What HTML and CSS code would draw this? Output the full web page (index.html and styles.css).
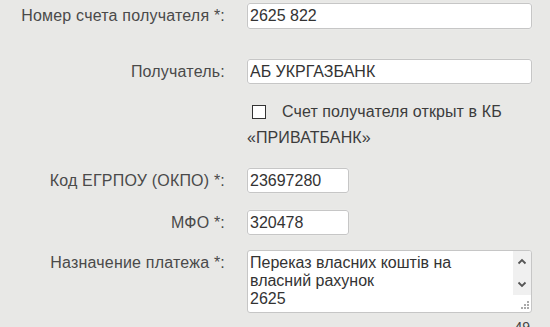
FILE: index.html
```html
<!DOCTYPE html>
<html lang="ru">
<head>
<meta charset="utf-8">
<link rel="stylesheet" href="styles.css">
</head>
<body>
<form class="form">
  <div class="row r1">
    <label class="lbl">Номер счета получателя *:</label>
    <input class="inp wide" type="text" value="2625 822">
  </div>
  <div class="row r2">
    <label class="lbl">Получатель:</label>
    <input class="inp wide" type="text" value="АБ УКРГАЗБАНК">
  </div>
  <div class="row r3">
    <span class="lbl"></span>
    <div class="check">
      <span class="box"></span><span class="check-text">Счет получателя открыт в КБ «ПРИВАТБАНК»</span>
    </div>
  </div>
  <div class="row r4">
    <label class="lbl">Код ЕГРПОУ (ОКПО) *:</label>
    <input class="inp short" type="text" value="23697280">
  </div>
  <div class="row r5">
    <label class="lbl">МФО *:</label>
    <input class="inp short" type="text" value="320478">
  </div>
  <div class="row r6">
    <label class="lbl lbl-top">Назначение платежа *:</label>
    <div class="ta">
      <div class="ta-text">Переказ власних коштів на<br>власний рахунок<br>2625</div>
      <div class="ta-side">
        <div class="ta-bar">
          <svg class="chev" width="10" height="7" viewBox="0 0 10 7"><path d="M1.5 5.5 L5 2 L8.5 5.5" fill="none" stroke="#555" stroke-width="1.8"/></svg>
          <svg class="chev" width="10" height="7" viewBox="0 0 10 7"><path d="M1.5 1.5 L5 5 L8.5 1.5" fill="none" stroke="#555" stroke-width="1.8"/></svg>
        </div>
        <svg class="grip" width="10" height="10" viewBox="0 0 10 10">
          <rect x="7" y="1" width="2" height="2" fill="#aaa"/>
          <rect x="4" y="4" width="2" height="2" fill="#aaa"/>
          <rect x="7" y="4" width="2" height="2" fill="#aaa"/>
          <rect x="1" y="7" width="2" height="2" fill="#aaa"/>
          <rect x="4" y="7" width="2" height="2" fill="#aaa"/>
          <rect x="7" y="7" width="2" height="2" fill="#aaa"/>
        </svg>
      </div>
    </div>
  </div>
  <div class="row r7">
    <span class="lbl"></span>
    <div class="counter">49</div>
  </div>
</form>
</body>
</html>
```
FILE: styles.css
```css
html, body {
  margin: 0;
  padding: 0;
  background: #e8e8e6;
  font-family: "Liberation Sans", Arial, sans-serif;
  font-size: 16px;
  color: #444;
  overflow: hidden;
}
.form {
  padding-top: 3px;
  display: flex;
  flex-direction: column;
}
.row {
  display: flex;
  align-items: center;
}
.lbl {
  width: 225px;
  margin-right: 22px;
  text-align: right;
  color: #4a4a4a;
  flex: none;
  white-space: nowrap;
  letter-spacing: 0.2px;
}
.lbl-top {
  align-self: flex-start;
  padding-top: 4px;
}
.row.r6 { align-items: flex-start; }
.r2 { margin-top: 30px; }
.r3 { margin-top: 15px; }
.r4 { margin-top: 17px; }
.r5 { margin-top: 17px; }
.r6 { margin-top: 15px; }
.r7 { margin-top: 6px; }
.inp {
  box-sizing: border-box;
  height: 25px;
  border: 1px solid #c6c6c6;
  border-radius: 3px;
  background: #fff;
  font-family: "Liberation Sans", Arial, sans-serif;
  font-size: 16px;
  color: #333;
  padding: 0 2px;
  margin: 0;
  box-shadow: 0 0 1px rgba(255,255,255,0.9);
}
.r1 .inp { height: 26px; }
.wide { width: 285px; }
.short { width: 102px; }
.check {
  width: 285px;
  line-height: 26px;
  color: #3c3c3c;
  letter-spacing: 0.1px;
}
.box {
  display: inline-block;
  box-sizing: border-box;
  width: 14px;
  height: 14px;
  border: 1px solid #333;
  background: #fff;
  margin-left: 5px;
  margin-right: 16px;
  vertical-align: -2px;
}
.ta {
  box-sizing: border-box;
  width: 285px;
  height: 63px;
  border: 1px solid #c6c6c6;
  border-radius: 3px;
  background: #fff;
  display: flex;
  overflow: hidden;
}
.ta-text {
  flex: 1;
  padding: 3px 2px 0 2px;
  line-height: 18px;
  color: #333;
  overflow: hidden;
  white-space: nowrap;
}
.ta-side {
  width: 18px;
  display: flex;
  flex-direction: column;
  align-items: center;
}
.ta-bar {
  width: 18px;
  height: 44px;
  background: #f0f0f0;
  display: flex;
  flex-direction: column;
  align-items: center;
  justify-content: space-between;
  padding: 7px 0 7px;
  box-sizing: border-box;
}
.grip {
  margin-top: auto;
  margin-bottom: 2px;
  align-self: flex-end;
  margin-right: 1px;
}
.counter {
  width: 285px;
  text-align: right;
  font-size: 14px;
  line-height: 16px;
  color: #444;
  padding-right: 2px;
  box-sizing: border-box;
}
```
